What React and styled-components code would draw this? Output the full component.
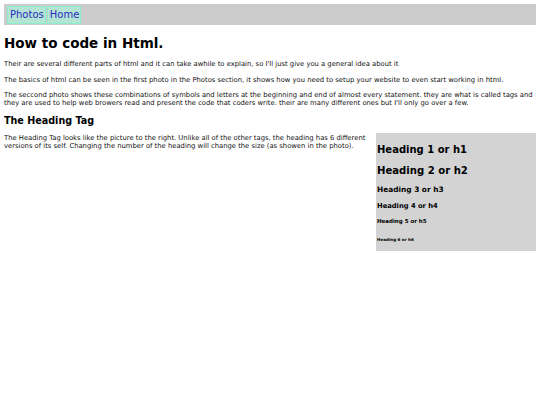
import React from 'react';
import styled, { createGlobalStyle } from 'styled-components';

const GlobalStyle = createGlobalStyle`
  html, body {
    margin: 0;
    padding: 0;
    background: #fff;
  }
  body {
    margin: 4px;
    font-family: "DejaVu Sans", Verdana, sans-serif;
    color: #000;
  }
`;

const Nav = styled.nav`
  display: flex;
  align-items: flex-start;
  gap: 1px;
  height: 19px;
  padding: 2px 3px 0;
  background: #cccccc;
`;

const NavLink = styled.a`
  display: block;
  padding: 2px 1px 2px 2px;
  font-size: 10px;
  line-height: 12px;
  color: #2b2bc4;
  text-decoration: none;
  background: #b4e4d4;
  border: 1px solid #8aeecb;
`;

const Title = styled.h1`
  margin: 10px 0 10px;
  font-size: 13.5px;
  line-height: 16px;
  font-weight: bold;
`;

const Para = styled.p`
  margin: 0 0 8px;
  font-size: 6.8px;
  line-height: 7.5px;
  color: #111;
`;

const SubTitle = styled.h2`
  margin: 0;
  font-size: 9.6px;
  line-height: 11px;
  font-weight: bold;
`;

const Section = styled.div`
  display: flex;
  align-items: flex-start;
  gap: 10px;
  margin-top: 7px;
`;

const SectionText = styled(Para)`
  flex: 1;
  margin: 2px 0 0;
`;

const Picture = styled.div`
  width: 160px;
  height: 118px;
  box-sizing: border-box;
  padding: 6px 1px 0;
  background: #d3d3d3;
`;

const Sample = styled.div`
  font-size: ${(p) => p.size}px;
  line-height: ${(p) => p.lh}px;
  font-weight: bold;
  white-space: nowrap;
`;

const samples = [
  { label: 'Heading 1 or h1', size: 10, lh: 21 },
  { label: 'Heading 2 or h2', size: 10.1, lh: 21 },
  { label: 'Heading 3 or h3', size: 7.4, lh: 17 },
  { label: 'Heading 4 or h4', size: 6.75, lh: 17 },
  { label: 'Heading 5 or h5', size: 5.5, lh: 12.5 },
  { label: 'Heading 6 or h6', size: 4.1, lh: 24 },
];

export default function App() {
  return (
    <>
      <GlobalStyle />
      <Nav>
        <NavLink href="#photos">Photos</NavLink>
        <NavLink href="#home">Home</NavLink>
      </Nav>
      <Title>How to code in Html.</Title>
      <Para>
        Their are several different parts of html and it can take awhile to explain, so I&apos;ll just give you a general idea about it
      </Para>
      <Para>
        The basics of html can be seen in the first photo in the Photos section, it shows how you need to setup your website to even start working in html.
      </Para>
      <Para>
        The seccond photo shows these combinations of symbols and letters at the beginning and end of almost every statement. they are what is called tags and they are used to help web browers read and present the code that coders write. their are many different ones but I&apos;ll only go over a few.
      </Para>
      <SubTitle>The Heading Tag</SubTitle>
      <Section>
        <SectionText>
          The Heading Tag looks like the picture to the right. Unlike all of the other tags, the heading has 6 different versions of its self. Changing the number of the heading will change the size (as showen in the photo).
        </SectionText>
        <Picture>
          {samples.map((s) => (
            <Sample key={s.label} size={s.size} lh={s.lh}>{s.label}</Sample>
          ))}
        </Picture>
      </Section>
    </>
  );
}
